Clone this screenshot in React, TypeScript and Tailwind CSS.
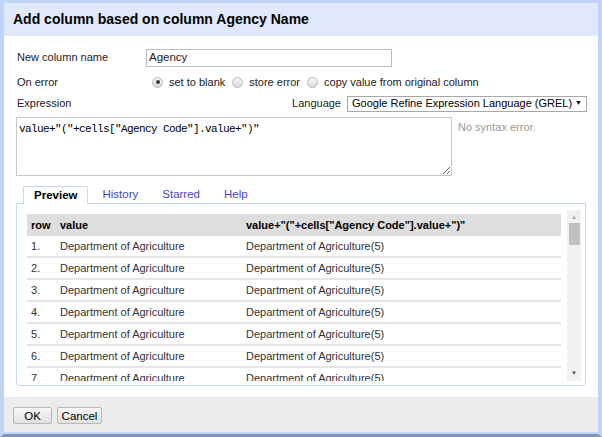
import React from 'react';

const ROWS = [1, 2, 3, 4, 5, 6, 7];

const Radio: React.FC<{ checked?: boolean }> = ({ checked }) => (
  <span className="ml-[6px] mr-[6px] flex h-[11px] w-[11px] items-center justify-center rounded-full border border-[#b9b9b9] bg-gradient-to-b from-[#fafafa] to-[#d8d8d8]">
    {checked && <span className="h-[4px] w-[4px] rounded-full bg-[#3a3a3a]" />}
  </span>
);

const App: React.FC = () => {
  return (
    <div
      className="flex h-[437px] w-[602px] flex-col border-l-4 border-r-4 border-t-[3px] border-b-[3px] border-[#bfd4f7] border-b-[#7f93b5] text-[11px] text-[#222]"
      style={{ fontFamily: '"Liberation Sans", Arial, sans-serif' }}
    >
      {/* Header */}
      <div className="flex h-[33px] items-center bg-[#dfe9fb] pl-[9px]">
        <h1 className="text-[14px] font-bold text-black">Add column based on column Agency Name</h1>
      </div>

      {/* Body */}
      <div className="flex flex-1 flex-col bg-white pl-[13px] pr-[11px] pt-[12px]">
        <div className="flex h-[19px] items-center">
          <span className="w-[129px]">New column name</span>
          <div className="flex h-[18px] w-[246px] items-center border border-[#bdbdbd] px-[2px] text-[11.5px]">Agency</div>
        </div>

        <div className="mt-[6px] flex h-[18px] items-center">
          <span className="w-[129px]">On error</span>
          <Radio checked />
          <span className="mr-[1px]">set to blank</span>
          <Radio />
          <span className="mr-[1px]">store error</span>
          <Radio />
          <span>copy value from original column</span>
        </div>

        <div className="mt-[4px] flex h-[17px] items-center">
          <span>Expression</span>
          <span className="ml-auto mr-[6px]">Language</span>
          <div className="flex h-[16px] w-[240px] items-center border border-[#a9a9a9] pl-[4px] pr-[4px] text-black">
            <span>Google Refine Expression Language (GREL)</span>
            <span className="ml-auto text-[7px]">▼</span>
          </div>
        </div>

        <div className="mt-[5px] ml-[-1px] flex items-start">
          <textarea
            readOnly
            value={'value+"("+cells["Agency Code"].value+")"'}
            className="h-[59px] w-[436px] resize border border-[#c8c8c8] px-[2px] py-[3px] text-[11px] tracking-[-0.6px] text-black outline-none"
            style={{ fontFamily: '"Liberation Mono", "DejaVu Sans Mono", monospace' }}
          />
          <span className="ml-[6px] mt-[2px] text-[#9a9a9a]">No syntax error.</span>
        </div>

        {/* Tabs */}
        <div className="mt-[10px] ml-[6px] flex h-[18px] items-stretch gap-[4px] text-[11.5px]">
          <div className="relative z-10 flex items-center rounded-t-[2px] border border-b-0 border-[#c5d7f5] bg-white px-[10px] font-bold text-black">
            Preview
          </div>
          <div className="flex items-center px-[10px] text-[#4646c8]">History</div>
          <div className="flex items-center px-[10px] text-[#4646c8]">Starred</div>
          <div className="flex items-center px-[10px] text-[#4646c8]">Help</div>
        </div>

        <div className="ml-[-1px] mt-[-1px] h-[183px] w-[570px] rounded-b-[4px] border border-[#c5d7f5] pl-[10px] pr-[4px] pt-[6px]">
          <div className="flex h-[171px]">
            <div className="w-[534px] overflow-hidden pt-[4px]">
              <div className="grid h-[22px] grid-cols-[29px_186px_1fr] items-center bg-[#dedede] font-bold text-black">
                <span className="pl-[4px]">row</span>
                <span className="pl-[4px]">value</span>
                <span className="pl-[4px]">value+"("+cells["Agency Code"].value+")"</span>
              </div>
              {ROWS.map((n) => (
                <div
                  key={n}
                  className="grid h-[22px] grid-cols-[29px_186px_1fr] items-center border-b-2 border-[#e6e6e6] text-[#333]"
                >
                  <span className="pl-[4px]">{n}.</span>
                  <span className="pl-[4px]">Department of Agriculture</span>
                  <span className="pl-[4px]">Department of Agriculture(5)</span>
                </div>
              ))}
            </div>
            <div className="ml-[6px] flex w-[14px] flex-col items-center bg-[#f1f1f1]">
              <span className="mt-[2px] text-[6px] leading-[10px] text-[#a3a3a3]">▲</span>
              <div className="mt-[1px] h-[22px] w-[11px] bg-[#c1c1c1]" />
              <span className="mb-[3px] mt-auto text-[6px] leading-[10px] text-[#505050]">▼</span>
            </div>
          </div>
        </div>
      </div>

      {/* Footer */}
      <div className="flex h-[37px] items-start gap-[5px] border-b-2 border-[#c3d6f5] bg-[#ececec] pl-[9px] pt-[10px]">
        <button className="h-[17px] w-[39px] rounded-[2px] border border-[#b9b9b9] bg-gradient-to-b from-[#f8f8f8] to-[#e1e1e1] text-[11.5px] text-black">
          OK
        </button>
        <button className="h-[17px] w-[45px] rounded-[2px] border border-[#b9b9b9] bg-gradient-to-b from-[#f8f8f8] to-[#e1e1e1] text-[11.5px] text-black">
          Cancel
        </button>
      </div>
    </div>
  );
};

export default App;
